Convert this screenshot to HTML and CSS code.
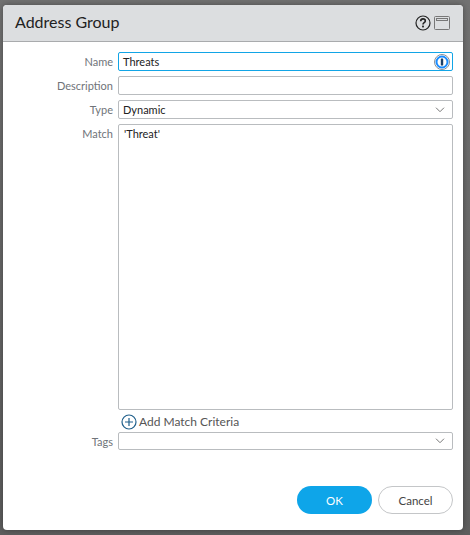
FILE: index.html
```html
<!DOCTYPE html>
<html lang="en">
<head>
  <meta charset="UTF-8" />
  <title>Address Group</title>
  <link rel="stylesheet" href="styles.css">
</head>
<body>
  <div class="dialog">
    <div class="dialog-header">
      <span class="dialog-title">Address Group</span>
      <span class="header-icons">
        <svg width="16" height="16" viewBox="0 0 16 16">
          <circle cx="8" cy="8" r="7" fill="none" stroke="#222" stroke-width="1.2"/>
          <path d="M5.7 6.2c0-1.4 1-2.3 2.3-2.3s2.3.9 2.3 2c0 1.8-2.3 1.8-2.3 3.6" fill="none" stroke="#222" stroke-width="1.6"/>
          <rect x="7.1" y="10.6" width="1.8" height="1.8" fill="#222"/>
        </svg>
        <svg width="16" height="14" viewBox="0 0 16 14">
          <rect x="0.5" y="0.5" width="15" height="13" rx="1" fill="none" stroke="#777"/>
          <rect x="2.5" y="2.5" width="11" height="2" fill="none" stroke="#777"/>
        </svg>
      </span>
    </div>

    <div class="form">
      <label class="field-label">Name</label>
      <div class="input input-focus">
        Threats
        <svg class="pw-icon" width="16" height="16" viewBox="0 0 16 16">
          <circle cx="8" cy="8" r="7.5" fill="#fff" stroke="#8a8f94"/>
          <circle cx="8" cy="8" r="5.5" fill="#fff" stroke="#1a8cff" stroke-width="2"/>
          <rect x="6.8" y="4.5" width="2.4" height="7" rx="0.5" fill="#1d3f66"/>
        </svg>
      </div>

      <label class="field-label">Description</label>
      <div class="input"></div>

      <label class="field-label">Type</label>
      <div class="input input-select">
        Dynamic
        <svg class="chevron" width="10" height="6" viewBox="0 0 10 6"><path d="M1 0.7L5 4.7l4-4" fill="none" stroke="#777"/></svg>
      </div>

      <label class="field-label match-label">Match</label>
      <div class="input match-box">'Threat'</div>

      <span></span>
      <div class="add-row">
        <svg width="16" height="16" viewBox="0 0 16 16">
          <circle cx="8" cy="8" r="7" fill="#fff" stroke="#1f5f8b" stroke-width="1.2"/>
          <path d="M8 4v8M4 8h8" stroke="#1f5f8b" stroke-width="1.2"/>
        </svg>
        Add Match Criteria
      </div>

      <label class="field-label">Tags</label>
      <div class="input input-select tags-box">
        <svg class="chevron" width="10" height="6" viewBox="0 0 10 6"><path d="M1 0.7L5 4.7l4-4" fill="none" stroke="#777"/></svg>
      </div>
    </div>

    <div class="dialog-footer">
      <button class="btn btn-ok">OK</button>
      <button class="btn btn-cancel">Cancel</button>
    </div>
  </div>
</body>
</html>
```

FILE: styles.css
```css
body {
  margin: 0;
  padding: 5px 7px 5px 3px;
  height: 525px;
  overflow: hidden;
  font-family: Lato, "Open Sans", sans-serif;
  background: linear-gradient(to bottom, #727272, #5e5e5e);
  color: #333;
}

.dialog {
  height: 525px;
  background: #fff;
  border-radius: 4px;
  box-shadow: 0 0 6px rgba(0,0,0,0.35);
  display: flex;
  flex-direction: column;
}

.dialog-header {
  height: 36px;
  flex: none;
  background: #dcdee0;
  border-bottom: 1px solid #a9abad;
  border-radius: 4px 4px 0 0;
  display: flex;
  align-items: center;
  justify-content: space-between;
  padding: 0 13px 0 12px;
}

.dialog-title {
  font-size: 16px;
  color: #222;
  margin-top: -3px;
}

.header-icons {
  display: flex;
  align-items: center;
  gap: 3px;
}

.form {
  display: grid;
  grid-template-columns: 110px 335px;
  column-gap: 5px;
  row-gap: 5px;
  grid-template-rows: 19px 19px 19px 286px 12px 18px;
  padding-top: 10px;
  font-size: 11px;
}

.field-label {
  text-align: right;
  color: #6f7479;
  line-height: 19px;
}

.input {
  box-sizing: border-box;
  border: 1px solid #b9bcbf;
  border-radius: 2px;
  padding: 0 4px;
  line-height: 17px;
  color: #222;
  position: relative;
}

.input-focus {
  border-color: #12a5e6;
}

.pw-icon {
  position: absolute;
  right: 2px;
  top: 1px;
}

.chevron {
  position: absolute;
  right: 7px;
  top: 6px;
}

.tags-box .chevron {
  top: 5px;
}

.match-box {
  padding: 0 5px;
}

.add-row {
  display: flex;
  align-items: center;
  gap: 2px;
  padding-left: 3px;
  font-size: 12px;
  color: #555;
}

.add-row svg {
  margin-top: 1px;
}

.dialog-footer {
  margin-top: auto;
  display: flex;
  justify-content: flex-end;
  gap: 6px;
  padding: 0 10px 16px 0;
}

.btn {
  width: 75px;
  height: 28px;
  border-radius: 14px;
  font-family: inherit;
  font-size: 11.5px;
  padding: 0;
}

.btn-ok {
  background: #0ea5e9;
  border: none;
  color: #fff;
}

.btn-cancel {
  background: #fff;
  border: 1px solid #c4c6c8;
  color: #444;
}
```
